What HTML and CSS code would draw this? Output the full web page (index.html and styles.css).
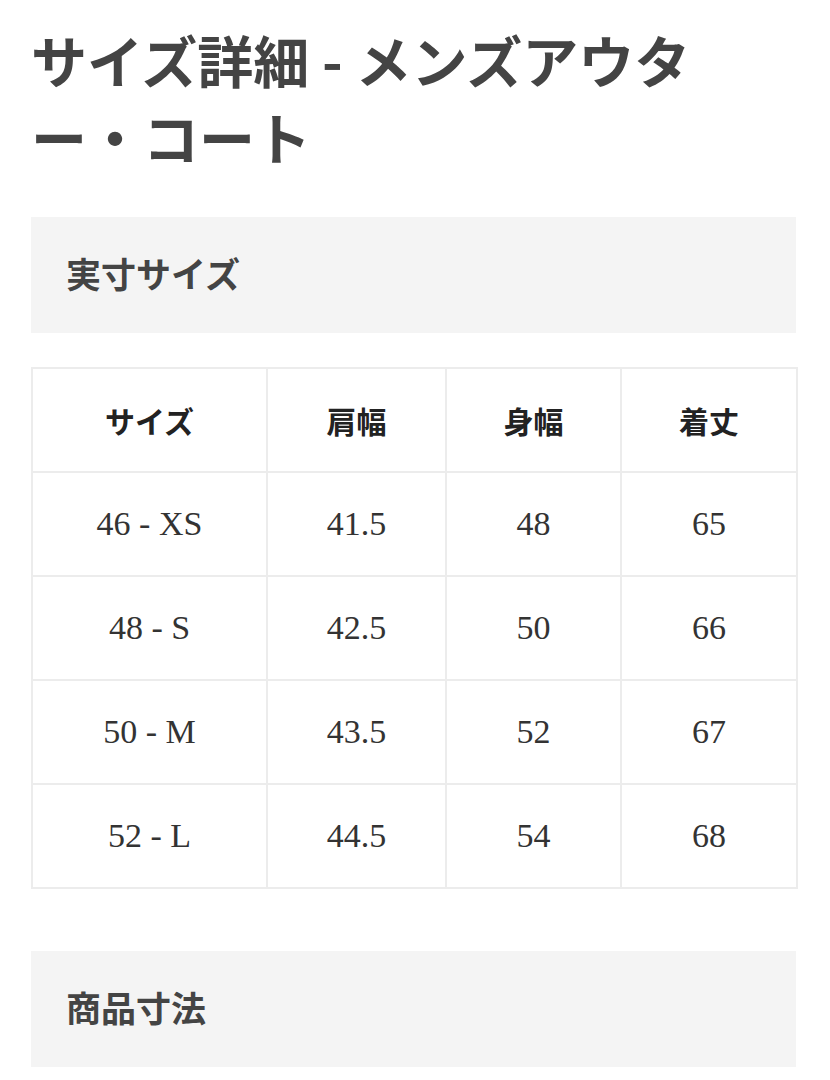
FILE: index.html
```html
<!DOCTYPE html>
<html lang="ja">
<head>
<meta charset="utf-8">
<title>サイズ詳細</title>
<link rel="stylesheet" href="styles.css">
</head>
<body>
<div class="page">
  <h1 class="title">サイズ詳細 - メンズアウター・コート</h1>
  <div class="section-head">実寸サイズ</div>
  <table class="size-table">
    <colgroup>
      <col class="c1"><col class="c2"><col class="c3"><col class="c4">
    </colgroup>
    <thead>
      <tr><th>サイズ</th><th>肩幅</th><th>身幅</th><th>着丈</th></tr>
    </thead>
    <tbody>
      <tr><td>46 - XS</td><td>41.5</td><td>48</td><td>65</td></tr>
      <tr><td>48 - S</td><td>42.5</td><td>50</td><td>66</td></tr>
      <tr><td>50 - M</td><td>43.5</td><td>52</td><td>67</td></tr>
      <tr><td>52 - L</td><td>44.5</td><td>54</td><td>68</td></tr>
    </tbody>
  </table>
  <div class="section-head section-head--second">商品寸法</div>
</div>
</body>
</html>
```

FILE: styles.css
```css
html, body {
  margin: 0;
  padding: 0;
  background: #ffffff;
}

.page {
  padding: 20px 34px 0 31px;
  font-family: "Noto Sans CJK JP", "Noto Sans", sans-serif;
}

.title {
  margin: 0;
  max-width: 700px;
  font-size: 56px;
  line-height: 77px;
  font-weight: 700;
  color: #444444;
}

.section-head {
  box-sizing: border-box;
  margin-top: 43px;
  height: 116px;
  display: flex;
  align-items: center;
  padding: 0 0 6px 35px;
  background: #f4f4f4;
  font-size: 35px;
  font-weight: 700;
  color: #444444;
}

.section-head--second {
  margin-top: 62px;
}

.size-table {
  margin-top: 34px;
  width: 100%;
  border-collapse: collapse;
  table-layout: fixed;
}

.c1 { width: 235px; }
.c2 { width: 179px; }
.c3 { width: 175px; }
.c4 { width: 176px; }

.size-table th,
.size-table td {
  border: 2px solid #ececec;
  height: 102px;
  padding: 0;
  text-align: center;
  vertical-align: middle;
  color: #333333;
}

.size-table th {
  font-family: "Liberation Serif", "Noto Sans CJK JP", serif;
  font-size: 30px;
  font-weight: 700;
  color: #222222;
}

.size-table td {
  font-family: "Liberation Serif", "Noto Sans CJK JP", serif;
  font-size: 34px;
  font-weight: 400;
}
```
